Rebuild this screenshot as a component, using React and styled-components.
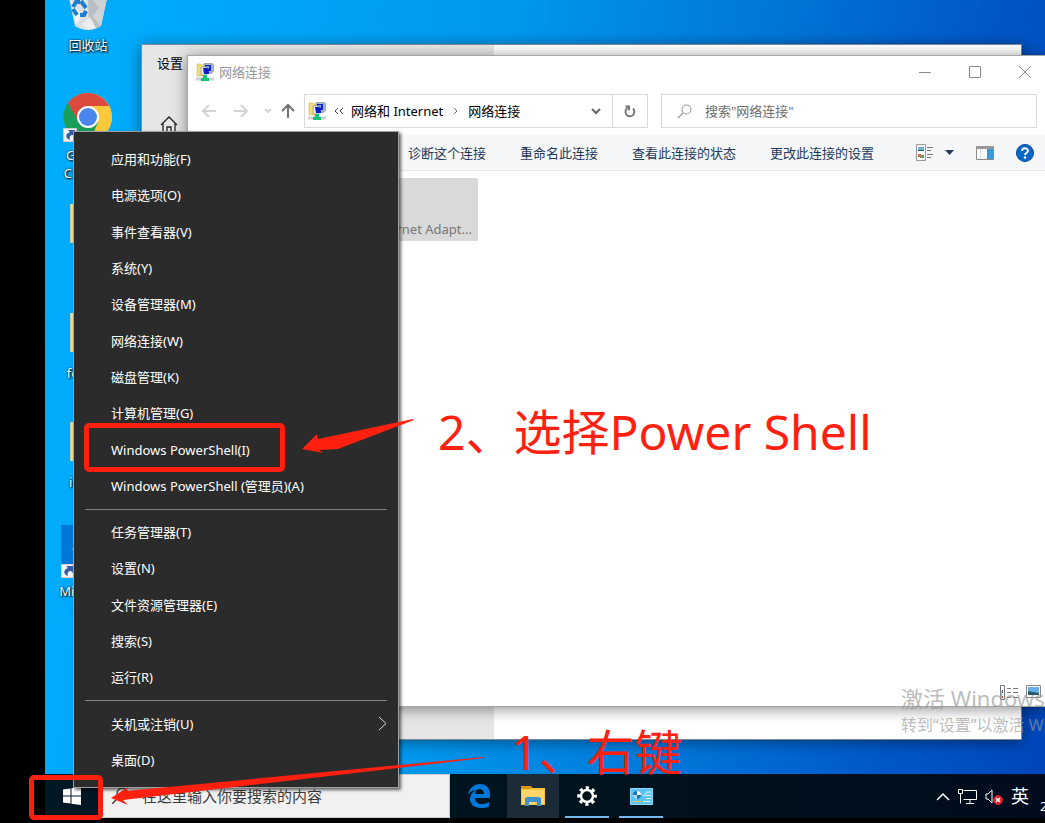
import React from 'react';
import styled, { createGlobalStyle } from 'styled-components';

const GlobalStyle = createGlobalStyle`
  * { box-sizing: border-box; }
  body {
    margin: 0;
    background: #000;
    overflow: hidden;
    font-family: "Noto Sans", "Noto Sans CJK SC", sans-serif;
    font-size: 13px;
    line-height: 18px;
  }
  button, input {
    font: inherit;
    color: inherit;
    border: 0;
    padding: 0;
    background: none;
  }
  svg { display: block; flex: none; }
`;

const Screen = styled.div`
  position: relative;
  display: flex;
  flex-direction: column;
  height: 100vh;
  padding: 0 0 5px 45px;
  overflow: hidden;
`;

const Desktop = styled.main`
  position: relative;
  flex: 1;
  overflow: hidden;
  background: linear-gradient(98deg, #00adfd 0%, #00a6fa 20%, #0098ee 42%, #0078da 65%, #0058c8 85%, #0046ba 100%);
`;

const DesktopItem = styled.div`
  position: absolute;
  left: ${(props) => props.$x}px;
  top: ${(props) => props.$y}px;
  width: 76px;
  display: flex;
  flex-direction: column;
  align-items: center;
  gap: ${(props) => props.$gap || 4}px;
  color: #fff;
  text-align: center;
  text-shadow: 1px 1px 2px #000, 0 0 2px #000;
`;

const Picture = styled.div`
  position: relative;
`;

const Shortcut = styled.svg`
  position: absolute;
  left: 0;
  bottom: 0;
`;

const Folder = styled.div`
  width: 36px;
  height: 39px;
  background: #f0dc98;
  border-left: 1px solid #c8c89a;
`;

const EdgeTile = styled.div`
  width: 54px;
  height: 53px;
  padding: 10px;
  background: #0078d7;
`;

const Window = styled.section`
  position: absolute;
  display: flex;
  box-shadow: 0 2px 14px rgba(0, 0, 0, 0.45);
`;

const SettingsWindow = styled(Window)`
  left: 96px;
  right: 23px;
  top: 44px;
  bottom: 34px;
  background: #fff;
  border: 1px solid #7d8b96;
`;

const SettingsSide = styled.div`
  width: 352px;
  padding: 9px 15px;
  background: #e6e6e6;
  display: flex;
  flex-direction: column;
  gap: 44px;
`;

const ExplorerWindow = styled(Window)`
  left: 142px;
  right: -3px;
  top: 55px;
  bottom: 67px;
  flex-direction: column;
  background: #fff;
  border: 1px solid #a5a5a5;
`;

const TitleBar = styled.header`
  display: flex;
  align-items: center;
  height: 31px;
  padding-left: 8px;
  gap: 5px;
  color: #999;
`;

const Title = styled.span`
  flex: 1;
`;

const CaptionButton = styled.button`
  width: 45px;
  height: 30px;
  display: flex;
  align-items: center;
  justify-content: center;
`;

const NavBar = styled.nav`
  display: flex;
  align-items: center;
  height: 48px;
  padding: 0 10px 0 12px;
`;

const NavButton = styled.button`
  width: ${(props) => props.$w}px;
  display: flex;
  justify-content: center;
`;

const Address = styled.div`
  display: flex;
  align-items: center;
  width: 344px;
  height: 34px;
  margin: 0 13px 0 0;
  padding-left: 3px;
  border: 1px solid #d9d9d9;
  color: #000;
`;

const Crumb = styled.a`
  color: inherit;
  text-decoration: none;
`;

const CrumbArrow = styled.span`
  width: 25px;
  display: flex;
  justify-content: center;
`;

const Spacer = styled.span`
  flex: 1;
`;

const Refresh = styled.button`
  width: 35px;
  height: 32px;
  border-left: 1px solid #d9d9d9;
  display: flex;
  align-items: center;
  justify-content: center;
`;

const SearchBox = styled.label`
  flex: 1;
  display: flex;
  align-items: center;
  height: 34px;
  gap: 13px;
  padding: 0 15px;
  border: 1px solid #d9d9d9;
`;

const SearchInput = styled.input`
  flex: 1;
  min-width: 0;
  outline: none;
  &::placeholder {
    color: ${(props) => props.$hint || '#6d6d6d'};
    opacity: 1;
  }
`;

const CommandBar = styled.div`
  display: flex;
  align-items: center;
  height: 36px;
  padding: 0 2px 0 220px;
  background: #f5f6f7;
  border-bottom: 1px solid #e4e6e8;
  color: #1e395b;
`;

const Command = styled.button`
  margin-right: 34px;
  white-space: nowrap;
`;

const Content = styled.div`
  flex: 1;
  padding: 7px 0 0 12px;
`;

const Adapter = styled.div`
  display: flex;
  align-items: flex-end;
  justify-content: flex-end;
  width: 278px;
  height: 63px;
  padding: 0 6px 3px;
  background: #d9d9d9;
  color: #777;
`;

const ViewModes = styled.div`
  display: flex;
  justify-content: flex-end;
  gap: 8px;
  padding: 0 6px 6px;
`;

const Watermark = styled.div`
  position: absolute;
  left: 856px;
  top: 683px;
  white-space: nowrap;
  color: rgba(150, 150, 150, 0.65);
  font-size: 16px;
  line-height: 24px;
`;

const WatermarkTitle = styled.div`
  font-size: 22px;
  line-height: 30px;
`;

const Taskbar = styled.footer`
  display: flex;
  height: 44px;
  background: linear-gradient(90deg, #001824, #00121d 60%, #000c1e);
  color: #fff;
`;

const StartButton = styled.button`
  width: 53px;
  display: flex;
  align-items: center;
  justify-content: center;
`;

const TaskSearch = styled.label`
  display: flex;
  align-items: center;
  width: 352px;
  padding-left: 12px;
  gap: 13px;
  background: #f1f1f1;
  border: 1px solid #ccc;
  color: #3b3b3b;
  font-size: 15px;
`;

const TaskButton = styled.button`
  width: 52px;
  margin-left: ${(props) => (props.$first ? 3 : 0)}px;
  margin-right: 2px;
  display: flex;
  align-items: center;
  justify-content: center;
  background: ${(props) => (props.$active ? '#1b2c38' : 'none')};
  position: relative;
  &::after {
    content: '';
    display: ${(props) => (props.$open ? 'block' : 'none')};
    position: absolute;
    left: 4px;
    right: 4px;
    bottom: 0;
    height: 2px;
    background: #76b9ed;
  }
`;

const Tray = styled.div`
  flex: 1;
  display: flex;
  align-items: center;
  justify-content: flex-end;
  gap: 8px;
  overflow: hidden;
`;

const Ime = styled.span`
  font-size: 18px;
  line-height: 24px;
`;

const Clock = styled.span`
  width: 8px;
  padding: 20px 0 0 3px;
  overflow: hidden;
  white-space: nowrap;
`;

const Menu = styled.div`
  position: absolute;
  left: 73px;
  bottom: 35px;
  width: 326px;
  height: 657px;
  display: flex;
  flex-direction: column;
  padding: 9px 0;
  background: #2b2b2b;
  border: 1px solid #a0a0a0;
  box-shadow: 2px 2px 3px rgba(0, 0, 0, 0.6);
  color: #fff;
`;

const MenuItem = styled.button`
  flex: 1;
  display: flex;
  align-items: center;
  justify-content: space-between;
  padding: 0 11px 0 37px;
`;

const Separator = styled.hr`
  width: 302px;
  height: 1px;
  margin: 5px 11px 4px;
  border: 0;
  background: #808080;
`;

const Mark = styled.div`
  position: absolute;
  left: ${(props) => props.$x}px;
  top: ${(props) => props.$y}px;
  width: ${(props) => props.$w}px;
  height: ${(props) => props.$h}px;
  border: 5px solid #ff2010;
  border-radius: 5px;
`;

const Arrow = styled.svg`
  position: absolute;
  left: ${(props) => props.$x}px;
  top: ${(props) => props.$y}px;
  fill: #ff2010;
`;

const Note = styled.div`
  position: absolute;
  left: ${(props) => props.$x}px;
  top: ${(props) => props.$y}px;
  color: #ff2010;
  font-size: 48px;
  line-height: 60px;
  white-space: nowrap;
`;

const RecycleIcon = () => (
  <svg width="40" height="44" viewBox="0 0 40 44">
    <path d="M1 12 L7 40 Q20 48 33 40 L39 12Z" fill="#dce0e3" />
    <path d="M20 12 L21 45 L33 40 L39 12Z" fill="#b9bfc4" />
    <path d="M24 13 L31 22 L24 30 L33 40 L39 12Z" fill="#cfd3d6" />
    <path d="M3 14 L8 38 L14 30 L9 22Z" fill="#f1f3f4" />
    <path d="M14 38 L22 31 L28 42 L20 44Z" fill="#eceeef" />
    <g fill="none" stroke="#1c7fd0" strokeWidth="4">
      <path d="M5 21 L8 16 L12 16" />
      <path d="M13 15 L18 22" />
      <path d="M18 25 L16 29 L12 29" />
      <path d="M5 23 L9 29" />
    </g>
  </svg>
);

const ShortcutIcon = () => (
  <Shortcut width="14" height="14" viewBox="0 0 14 14">
    <rect width="14" height="14" fill="#f3f3f3" stroke="#aaa" />
    <path d="M5 2h7v7l-2-2c-3 0-4 2-3 5c-5-2-5-6 0-8z" fill="#2f5da8" />
  </Shortcut>
);

const ChromeIcon = () => (
  <svg width="50" height="50" viewBox="0 0 50 50">
    <circle cx="25" cy="25" r="24" fill="#fdc93c" />
    <path d="M25 25 L5 11 A24 24 0 0 0 27 49 L36 30Z" fill="#1a9e5c" />
    <path d="M25 14 H46 A24 24 0 0 0 5 11 L15 29 Z" fill="#dc4a3e" />
    <path d="M36 28 L27 49 A24 24 0 0 0 46 14 H25Z" fill="#fdc93c" />
    <circle cx="25" cy="25" r="11" fill="#fff" />
    <circle cx="25" cy="25" r="9" fill="#4a86f0" />
  </svg>
);

const NetworkIcon = () => (
  <svg width="18" height="18" viewBox="0 0 18 18">
    <path d="M1 1h4l1 1h4v11H1z" fill="#f4dc78" stroke="#d7b450" strokeWidth="0.6" />
    <path d="M8 .5h8.500l1 1v7l-2 2H8z" fill="#a9b3c6" stroke="#8995a0" strokeWidth="0.7" />
    <path d="M9 2h6v6H9z" fill="#1226c4" />
    <path d="M5 4h6v8H5z" fill="#eceff2" stroke="#8995a0" strokeWidth="0.7" />
    <path d="M7 5h4l2 4v2H8z" fill="#0a1cc0" />
    <path d="M10 3h3v3z" fill="#91a8ef" />
    <path d="M0 16h18" stroke="#ced2d5" strokeWidth="3" />
    <path d="M7 12h4v3h2v3H5v-3h2z" fill="#10c277" />
  </svg>
);

const Lens = ({ color, size = 15 }) => (
  <svg width={size} height={size} viewBox="0 0 15 15" fill="none" stroke={color} strokeWidth="1.1">
    <circle cx="9.5" cy="5.5" r="4.5" />
    <path d="M6 9 L1 14" />
  </svg>
);

const ArrowIcon = ({ turn = 0, color = '#d4d4d4' }) => (
  <svg width="14" height="14" viewBox="0 0 14 14" fill="none" stroke={color} strokeWidth="2">
    <path d="M14 7H1M7 1L1 7l6 6" transform={`rotate(${turn} 7 7)`} />
  </svg>
);

const Chevron = ({ w = 10, color = '#666', d = 'M1 1l4 4 4-4', h = 7, stroke = 2 }) => (
  <svg width={w} height={h} viewBox={`0 0 ${w} ${h}`} fill="none" stroke={color} strokeWidth={stroke}>
    <path d={d} />
  </svg>
);

const EdgeIcon = ({ color = '#0078d7', size = 24 }) => (
  <svg width={size} height={size} viewBox="0 0 24 24" fill={color}>
    <path d="M1 11C2 4 7 0 13 0c7 0 11 5 10 14H8c0 4 3 6 7 6c3 0 5-1 7-2v4.500c-2 1-5 1.500-8 1.500C7 24 3 20 3 15c0-4 2-7 6-9c-4 0-7 3-8 5zM8 10h9C17 7 15 5 12.500 5S8 7 8 10z" />
  </svg>
);

const groups = [
  ['应用和功能(F)', '电源选项(O)', '事件查看器(V)', '系统(Y)', '设备管理器(M)', '网络连接(W)', '磁盘管理(K)', '计算机管理(G)', 'Windows PowerShell(I)', 'Windows PowerShell (管理员)(A)'],
  ['任务管理器(T)', '设置(N)', '文件资源管理器(E)', '搜索(S)', '运行(R)'],
  ['关机或注销(U)', '桌面(D)'],
];

const commands = ['诊断这个连接', '重命名此连接', '查看此连接的状态', '更改此连接的设置'];

const DesktopIcons = () => (
  <>
    <DesktopItem $x={5} $y={-14} $gap={6}>
      <RecycleIcon />
      回收站
    </DesktopItem>
    <DesktopItem $x={5} $y={92}>
      <Picture>
        <ChromeIcon />
        <ShortcutIcon />
      </Picture>
      Google Chrome
    </DesktopItem>
    <DesktopItem $x={5} $y={204}><Folder /></DesktopItem>
    <DesktopItem $x={5} $y={313} $gap={12}>
      <Folder />
      folders
    </DesktopItem>
    <DesktopItem $x={5} $y={422} $gap={12}>
      <Folder />
      image
    </DesktopItem>
    <DesktopItem $x={5} $y={525}>
      <Picture>
        <EdgeTile><EdgeIcon color="#fff" size={34} /></EdgeTile>
        <ShortcutIcon />
      </Picture>
      Microsoft Edge
    </DesktopItem>
  </>
);

const Explorer = () => (
  <ExplorerWindow>
    <TitleBar>
      <NetworkIcon />
      <Title>网络连接</Title>
      <CaptionButton aria-label="最小化">
        <svg width="12" height="12" stroke="#8c8c8c"><path d="M0 6.500h12" /></svg>
      </CaptionButton>
      <CaptionButton aria-label="最大化">
        <svg width="12" height="12" stroke="#8c8c8c" fill="none"><path d="M.5.500h11v11H.5z" /></svg>
      </CaptionButton>
      <CaptionButton aria-label="关闭">
        <svg width="12" height="12" stroke="#8c8c8c"><path d="M0 0l12 12M12 0L0 12" /></svg>
      </CaptionButton>
    </TitleBar>
    <NavBar>
      <NavButton $w={18} aria-label="后退"><ArrowIcon /></NavButton>
      <NavButton $w={46} aria-label="前进"><ArrowIcon turn={180} /></NavButton>
      <NavButton $w={8} aria-label="历史"><Chevron color="#d4d4d4" w={8} d="M1 1l3 3 3-3" h={6} /></NavButton>
      <NavButton $w={32} aria-label="向上"><ArrowIcon turn={90} color="#707070" /></NavButton>
      <Address>
        <NetworkIcon />
        <CrumbArrow>
          <Chevron w={10} h={8} d="M4 1L1 4l3 3M9 1L6 4l3 3" color="#444" stroke={1} />
        </CrumbArrow>
        <Crumb href="#network">网络和 Internet</Crumb>
        <CrumbArrow><Chevron w={5} h={8} d="M1 1l3 3-3 3" stroke={1} /></CrumbArrow>
        <Crumb href="#connections">网络连接</Crumb>
        <Spacer />
        <NavButton $w={32} aria-label="展开"><Chevron /></NavButton>
        <Refresh aria-label="刷新">
          <svg width="12" height="13" viewBox="0 0 12 13" fill="none" stroke="#707070" strokeWidth="1.800">
            <path d="M9 3.500A4.500 4.500 0 1 1 3.500 3M1.500 1.500H5V5.500" />
          </svg>
        </Refresh>
      </Address>
      <SearchBox>
        <Lens color="#999" />
        <SearchInput aria-label="搜索" placeholder={'搜索"网络连接"'} />
      </SearchBox>
    </NavBar>
    <CommandBar>
      {commands.map((name) => <Command key={name}>{name}</Command>)}
      <Spacer />
      <NavButton $w={17} aria-label="视图">
        <svg width="17" height="17" viewBox="0 0 17 17">
          <path d="M.5.500h9v16h-9z" fill="#fff" stroke="#999" />
          <path d="M2 3h6v4H2z" fill="#6ab1dc" />
          <path d="M2 6h6v1H2z" fill="#285c48" />
          <path d="M2 10h3v3H2z" fill="#e06744" />
          <path d="M5 11h3v3H4z" fill="#53a65d" />
          <path d="M11 3.500h6M11 6.500h4M11 10.500h6M11 13.500h4" stroke="#777" />
        </svg>
      </NavButton>
      <NavButton $w={32} aria-label="更多选项">
        <svg width="9" height="5"><path d="M0 0h9L4.500 5z" fill="#1e395b" /></svg>
      </NavButton>
      <NavButton $w={40} aria-label="预览窗格">
        <svg width="18" height="14" viewBox="0 0 18 14">
          <path d="M.5.500h17v13H.5z" fill="#fff" stroke="#888" />
          <path d="M0 0h18v3H0z" fill="#999" />
          <path d="M11 3h6v10h-6z" fill="#3998dc" />
          <path d="M4.500 3v10" stroke="#ddd" />
        </svg>
      </NavButton>
      <NavButton $w={40} aria-label="帮助">
        <svg width="18" height="18" viewBox="0 0 18 18">
          <circle cx="9" cy="9" r="8.500" fill="#0768c5" stroke="#04489a" />
          <path d="M6 7C6 3.500 12 3.500 12 6.800C12 9 9 8.500 9 11" fill="none" stroke="#fff" strokeWidth="2" />
          <circle cx="9" cy="13.500" r="1.200" fill="#fff" />
        </svg>
      </NavButton>
    </CommandBar>
    <Content>
      <Adapter>Ethernet Adapt...</Adapter>
    </Content>
    <ViewModes>
      <svg width="18" height="15" viewBox="0 0 18 15">
        <path d="M.5.500h4v14h-4z" fill="#fff" stroke="#777" />
        <path d="M2 5h1v3H2z" fill="#356" />
        <path d="M2 11h1v2H2z" fill="#c33" />
        <path d="M7 3.500h4M7 7.500h4M7 12.500h4M13 3.500h5M13 7.500h5M13 12.500h5" stroke="#777" />
      </svg>
      <svg width="15" height="13" viewBox="0 0 15 13">
        <path d="M.5.500h14v12H.5z" fill="#fff" stroke="#888" />
        <path d="M2 2h11v8H2z" fill="#68afe9" />
        <path d="M2 6l5 1 6 1v2H2z" fill="#285b68" />
      </svg>
    </ViewModes>
  </ExplorerWindow>
);

const BottomBar = () => (
  <Taskbar>
    <StartButton aria-label="开始">
      <svg width="18" height="18" viewBox="0 0 18 18" fill="#fff">
        <path d="M0 2.500L7.500 1.500V8.500H0zM8.500 1.300L18 0V8.500H8.500zM0 9.500H7.500V16.500L0 15.500zM8.500 9.500H18V18L8.500 16.700z" />
      </svg>
    </StartButton>
    <TaskSearch>
      <Lens color="#333" size={18} />
      <SearchInput $hint="#3b3b3b" aria-label="任务栏搜索" placeholder="在这里输入你要搜索的内容" />
    </TaskSearch>
    <TaskButton $first aria-label="Edge"><EdgeIcon /></TaskButton>
    <TaskButton $active aria-label="文件资源管理器">
      <svg width="24" height="20" viewBox="0 0 24 20">
        <path d="M0 0h10l1 2h13v17H0z" fill="#f9c33b" />
        <path d="M0 0h10v3H0z" fill="#d9990e" />
        <path d="M1 4h22v14H1z" fill="#ffd668" />
        <path d="M4 20v-8l2-1h12l2 1v8h-4v-4H8v4z" fill="#3d91d1" />
      </svg>
    </TaskButton>
    <TaskButton $open aria-label="设置">
      <svg width="20" height="20" viewBox="0 0 20 20" fill="none" stroke="#fff">
        <circle cx="10" cy="10" r="6" strokeWidth="2.500" />
        <circle cx="10" cy="10" r="8.300" strokeWidth="3" strokeDasharray="3.260 3.260" strokeDashoffset="1.600" />
      </svg>
    </TaskButton>
    <TaskButton $open aria-label="控制面板">
      <svg width="23" height="17" viewBox="0 0 23 17">
        <path d="M.5.500h22v16H.5z" fill="#5dc4f2" stroke="#8bdcff" />
        <circle cx="7" cy="7" r="4" fill="#2174b4" />
        <path d="M7 7V3A4 4 0 0 1 11 7z" fill="#fff" />
        <path d="M3 7h4v4a4 4 0 0 1-4-4z" fill="#a9d9ee" />
        <path d="M13 8l2-1 2-3h4M16 7.500h5M16 10.500h5" fill="none" stroke="#e8faff" />
        <path d="M3 13.500h8" stroke="#ebc858" />
        <path d="M13 13.500h7" stroke="#e8faff" />
      </svg>
    </TaskButton>
    <Tray>
      <Chevron w={14} h={9} d="M1 8l6-6 6 6" color="#fff" stroke={1.5} />
      <svg width="19" height="17" viewBox="0 0 19 17" fill="none" stroke="#fff">
        <path d="M5.500 2.500h13v9h-13M12 12v3.500M8 15.500h8M.5 1.500h4v4h-4zM2.500 6v9.500" />
      </svg>
      <svg width="18" height="17" viewBox="0 0 18 17" fill="none" stroke="#fff">
        <path d="M1 6h2l4-4v13l-4-4H1z" />
        <circle cx="13" cy="12" r="4.500" fill="#d9202c" stroke="#d9202c" />
        <path d="M11 10l4 4M15 10l-4 4" strokeWidth="1.500" />
      </svg>
      <Ime>英</Ime>
      <Clock>2</Clock>
    </Tray>
  </Taskbar>
);

const App = () => (
  <>
    <GlobalStyle />
    <Screen>
      <Desktop>
        <DesktopIcons />
        <SettingsWindow>
          <SettingsSide>
            设置
            <svg width="24" height="17" viewBox="0 0 24 17" fill="none" stroke="#222" strokeWidth="1.300">
              <path d="M4 9l8-8 8 8M6 7v9h4v-5h4v5h4V7" />
            </svg>
          </SettingsSide>
        </SettingsWindow>
        <Explorer />
        <Watermark>
          <WatermarkTitle>激活 Windows</WatermarkTitle>
          转到“设置”以激活 Windows。
        </Watermark>
      </Desktop>
      <BottomBar />
      <Menu>
        {groups.map((items, i) => (
          <React.Fragment key={items[0]}>
            {i > 0 && <Separator />}
            {items.map((name) => (
              <MenuItem key={name}>
                {name}
                {name === '关机或注销(U)' && (
                  <Chevron w={9} h={15} d="M1 1l7 6.500L1 14" color="#ddd" stroke={1} />
                )}
              </MenuItem>
            ))}
          </React.Fragment>
        ))}
      </Menu>
      <Mark $x={84} $y={423} $w={201} $h={49} />
      <Mark $x={29} $y={775} $w={74} $h={45} />
      <Arrow $x={302} $y={419} width="112" height="35">
        <path d="M0 30L15 15L16 20L111 0L112 1L36 30L17 31L21 34z" />
      </Arrow>
      <Arrow $x={111} $y={756} width="374" height="50">
        <path d="M0 42L17 31L15 35L373 1V2L12 44L17 49z" />
      </Arrow>
      <Note $x={438} $y={402}>2、选择Power Shell</Note>
      <Note $x={511} $y={722}>1、右键</Note>
    </Screen>
  </>
);

export default App;
